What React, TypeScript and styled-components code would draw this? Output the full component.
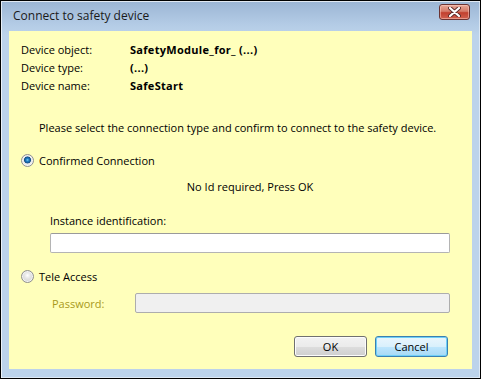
import React, { useState } from 'react';
import styled, { createGlobalStyle } from 'styled-components';

const GlobalStyle = createGlobalStyle`
  html, body {
    margin: 0;
    padding: 0;
    background: #ffffff;
  }
  * {
    box-sizing: border-box;
  }
`;

const Window = styled.div`
  width: 481px;
  height: 379px;
  border: 1px solid #000;
  display: flex;
  flex-direction: column;
  padding: 0 8px 9px 8px;
  background: linear-gradient(#9bb5d4 0px, #b4cce6 24px, #bcd3eb 34px, #bcd3eb 100%);
  box-shadow: inset 1px 1px 0 rgba(255, 255, 255, 0.7), inset -1px -1px 0 rgba(255, 255, 255, 0.5);
  font-family: 'Open Sans', 'Noto Sans', sans-serif;
  font-size: 11px;
  color: #000;
`;

const TitleBar = styled.div`
  height: 30px;
  display: flex;
  align-items: center;
  justify-content: space-between;
  padding: 0 2px 0 4px;
`;

const Title = styled.span`
  font-size: 12px;
  color: #1a1a1a;
  margin-top: -1px;
`;

const CloseButton = styled.button`
  width: 31px;
  height: 16px;
  margin-top: -8px;
  padding: 0;
  border: 1px solid #6b3332;
  border-radius: 3px;
  background: linear-gradient(#e8a898 0%, #d57a68 45%, #c2402f 55%, #d0614f 100%);
  box-shadow: inset 0 0 0 1px rgba(255, 210, 200, 0.5);
  display: flex;
  align-items: center;
  justify-content: center;
`;

const Client = styled.div`
  flex: 1;
  background: #ffffbb;
  padding: 9px 22px 0 12px;
  display: flex;
  flex-direction: column;
`;

const InfoGrid = styled.div`
  display: grid;
  grid-template-columns: 109px 1fr;
  grid-auto-rows: 18px;
  align-items: center;
`;

const InfoValue = styled.span`
  font-weight: 700;
  letter-spacing: 0.3px;
`;

const Prompt = styled.div`
  margin: 25px 0 0 18px;
  line-height: 18px;
`;

const RadioRow = styled.label<{ $top: number }>`
  margin-top: ${(p) => p.$top}px;
  display: flex;
  align-items: center;
  gap: 5px;
  height: 18px;
`;

const RadioDot = styled.span<{ $checked: boolean }>`
  width: 13px;
  height: 13px;
  border-radius: 50%;
  border: 1px solid #8f8f8f;
  background: ${(p) =>
    p.$checked
      ? 'radial-gradient(circle at 50% 45%, #7fd0f5 0px, #1f7fc4 1.5px, #174e86 3.2px, #e6e6e6 3.8px, #f6f6f6 100%)'
      : 'radial-gradient(circle at 50% 40%, #ffffff 0px, #e6e6e6 3px, #c8c8c8 100%)'};
  box-shadow: inset 0 0 0 1px #f4f4f4;
`;

const Indented = styled.div`
  margin-left: 29px;
  width: 400px;
  display: flex;
  flex-direction: column;
`;

const Hint = styled.div`
  margin-top: 9px;
  text-align: center;
  line-height: 18px;
`;

const FieldLabel = styled.div`
  margin-top: 16px;
  line-height: 18px;
`;

const TextInput = styled.input`
  margin-top: 3px;
  width: 400px;
  height: 20px;
  border: 1px solid #b4b4b4;
  border-top-color: #9a9a9a;
  border-radius: 2px;
  background: #fff;
  font: inherit;
  padding: 0 3px;
  outline: none;
`;

const PasswordRow = styled.div`
  margin: 8px 0 0 31px;
  display: flex;
  align-items: center;
`;

const DisabledLabel = styled.span`
  width: 83px;
  color: #a8991a;
`;

const DisabledInput = styled.input`
  width: 315px;
  height: 20px;
  border: 1px solid #adadad;
  border-radius: 2px;
  background: #f0f0f0;
  font: inherit;
  outline: none;
`;

const ButtonRow = styled.div`
  margin-top: 23px;
  margin-right: 2px;
  display: flex;
  justify-content: flex-end;
  gap: 8px;
`;

const Button = styled.button<{ $default?: boolean }>`
  width: 73px;
  height: 21px;
  padding: 0;
  font: inherit;
  color: #000;
  border-radius: 3px;
  border: 1px solid ${(p) => (p.$default ? '#3c7fb1' : '#707070')};
  background: ${(p) =>
    p.$default
      ? 'linear-gradient(#eaf6fd 0%, #d9f0fc 50%, #bee6fd 51%, #a7d9f5 100%)'
      : 'linear-gradient(#f2f2f2 0%, #ebebeb 50%, #dddddd 51%, #cfcfcf 100%)'};
  box-shadow: ${(p) =>
    p.$default ? 'inset 0 0 0 1px #6fd0f7' : 'inset 0 0 0 1px #fcfcfc'};
`;

const CloseGlyph = () => (
  <svg width="13" height="10" viewBox="0 0 13 10">
    <path d="M2 1 L11 9 M11 1 L2 9" stroke="#5a2a2a" strokeWidth="4" strokeLinecap="round" />
    <path d="M2 1 L11 9 M11 1 L2 9" stroke="#ffffff" strokeWidth="2.2" strokeLinecap="round" />
  </svg>
);

const App: React.FC = () => {
  const [mode, setMode] = useState<'confirmed' | 'tele'>('confirmed');

  return (
    <>
      <GlobalStyle />
      <Window>
        <TitleBar>
          <Title>Connect to safety device</Title>
          <CloseButton aria-label="Close">
            <CloseGlyph />
          </CloseButton>
        </TitleBar>
        <Client>
          <InfoGrid>
            <span>Device object:</span>
            <InfoValue>SafetyModule_for_ (...)</InfoValue>
            <span>Device type:</span>
            <InfoValue>(...)</InfoValue>
            <span>Device name:</span>
            <InfoValue>SafeStart</InfoValue>
          </InfoGrid>

          <Prompt>Please select the connection type and confirm to connect to the safety device.</Prompt>

          <RadioRow $top={14} onClick={() => setMode('confirmed')}>
            <RadioDot $checked={mode === 'confirmed'} />
            <span>Confirmed Connection</span>
          </RadioRow>

          <Indented>
            <Hint>No Id required, Press OK</Hint>
            <FieldLabel>Instance identification:</FieldLabel>
            <TextInput />
          </Indented>

          <RadioRow $top={14} onClick={() => setMode('tele')}>
            <RadioDot $checked={mode === 'tele'} />
            <span>Tele Access</span>
          </RadioRow>

          <PasswordRow>
            <DisabledLabel>Password:</DisabledLabel>
            <DisabledInput disabled />
          </PasswordRow>

          <ButtonRow>
            <Button>OK</Button>
            <Button $default>Cancel</Button>
          </ButtonRow>
        </Client>
      </Window>
    </>
  );
};

export default App;
